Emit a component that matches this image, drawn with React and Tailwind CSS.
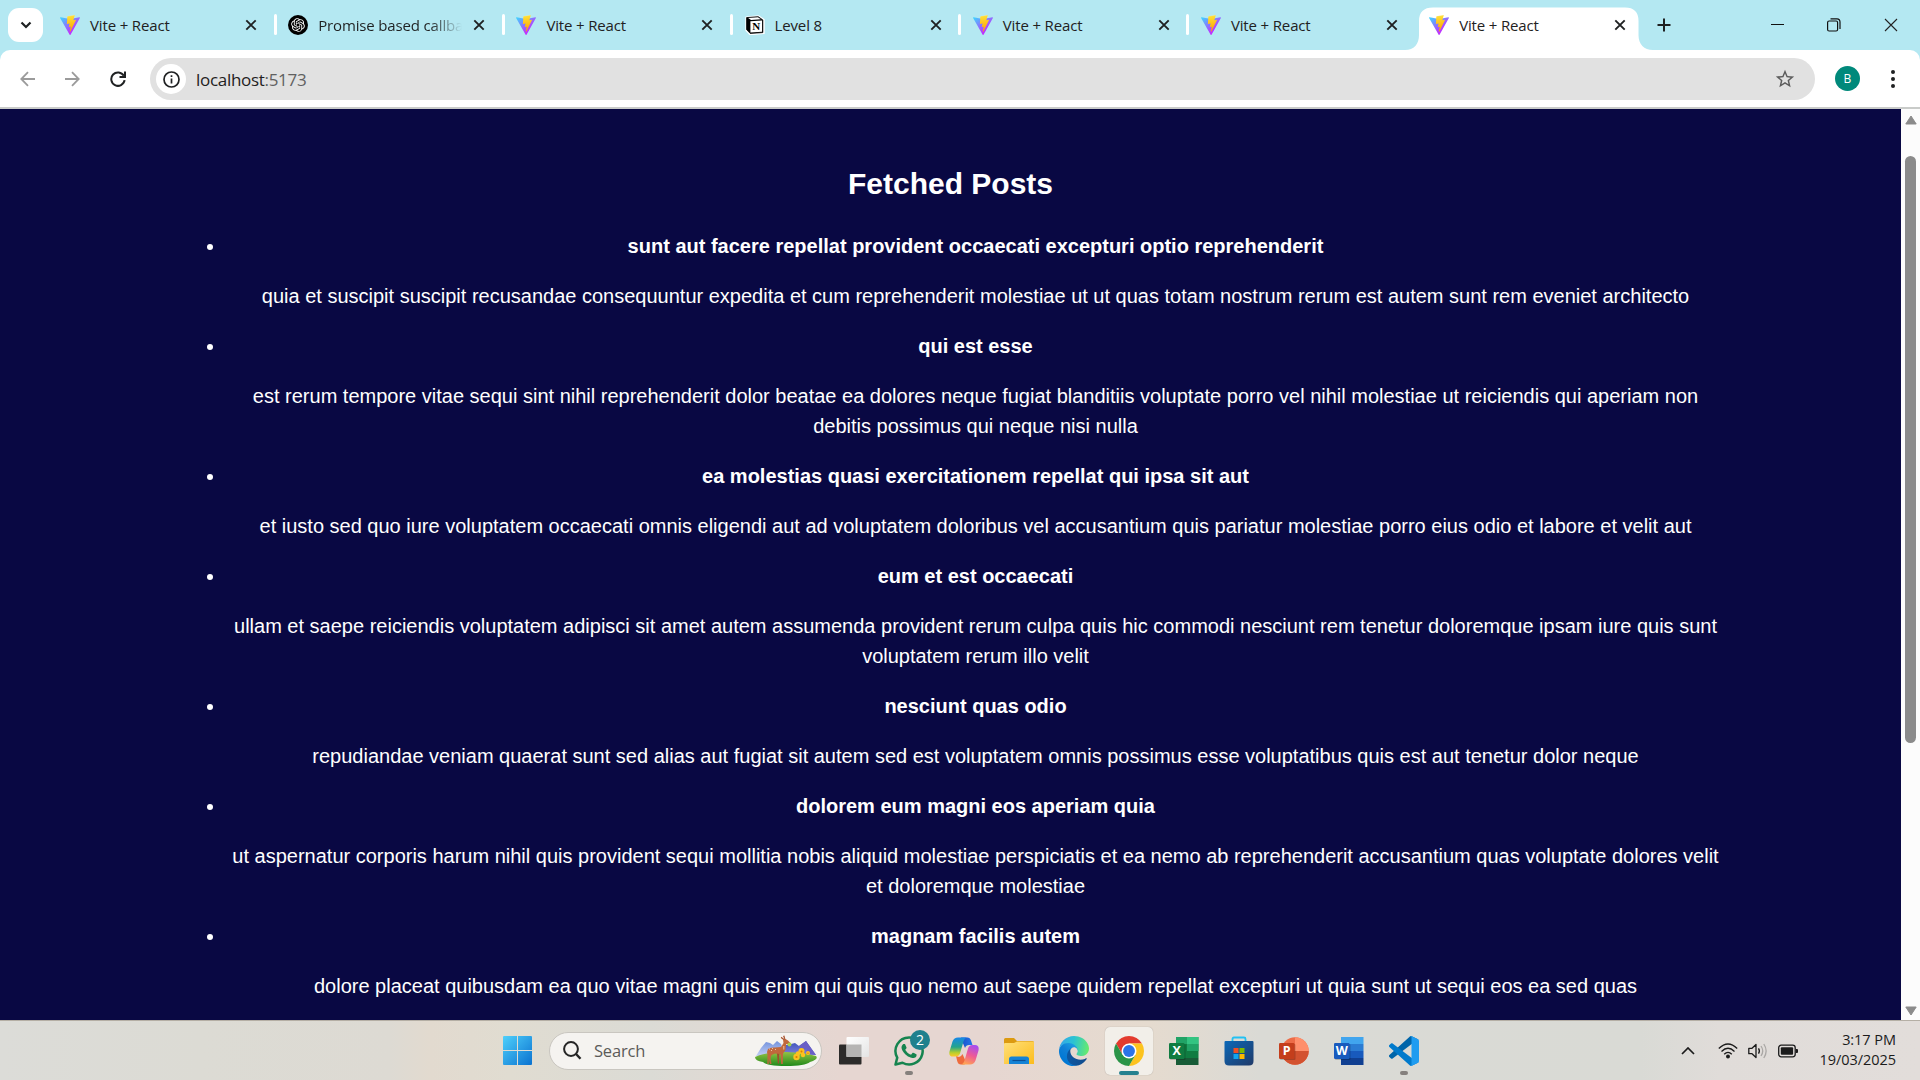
import React from "react";

const UI = "font-['Open_Sans','Noto_Sans',sans-serif]";

const posts = [
  ["sunt aut facere repellat provident occaecati excepturi optio reprehenderit", "quia et suscipit suscipit recusandae consequuntur expedita et cum reprehenderit molestiae ut ut quas totam nostrum rerum est autem sunt rem eveniet architecto"],
  ["qui est esse", "est rerum tempore vitae sequi sint nihil reprehenderit dolor beatae ea dolores neque fugiat blanditiis voluptate porro vel nihil molestiae ut reiciendis qui aperiam non debitis possimus qui neque nisi nulla"],
  ["ea molestias quasi exercitationem repellat qui ipsa sit aut", "et iusto sed quo iure voluptatem occaecati omnis eligendi aut ad voluptatem doloribus vel accusantium quis pariatur molestiae porro eius odio et labore et velit aut"],
  ["eum et est occaecati", "ullam et saepe reiciendis voluptatem adipisci sit amet autem assumenda provident rerum culpa quis hic commodi nesciunt rem tenetur doloremque ipsam iure quis sunt voluptatem rerum illo velit"],
  ["nesciunt quas odio", "repudiandae veniam quaerat sunt sed alias aut fugiat sit autem sed est voluptatem omnis possimus esse voluptatibus quis est aut tenetur dolor neque"],
  ["dolorem eum magni eos aperiam quia", "ut aspernatur corporis harum nihil quis provident sequi mollitia nobis aliquid molestiae perspiciatis et ea nemo ab reprehenderit accusantium quas voluptate dolores velit et doloremque molestiae"],
  ["magnam facilis autem", "dolore placeat quibusdam ea quo vitae magni quis enim qui quis quo nemo aut saepe quidem repellat excepturi ut quia sunt ut sequi eos ea sed quas"],
];

const tabs = [
  ["vite", "Vite + React"],
  ["gpt", "Promise based callba"],
  ["vite", "Vite + React"],
  ["notion", "Level 8"],
  ["vite", "Vite + React"],
  ["vite", "Vite + React"],
  ["vite", "Vite + React"],
];

function ViteIcon() {
  return (
    <svg viewBox="0 0 256 257" className="h-5 w-5 shrink-0">
      <defs>
        <linearGradient id="va" x1="-.8%" x2="57.6%" y1="7.7%" y2="78.4%">
          <stop offset="0%" stopColor="#41D1FF" />
          <stop offset="100%" stopColor="#BD34FE" />
        </linearGradient>
        <linearGradient id="vb" x1="43.4%" x2="50.3%" y1="2.2%" y2="89%">
          <stop offset="0%" stopColor="#FFEA83" />
          <stop offset="8.3%" stopColor="#FFDD35" />
          <stop offset="100%" stopColor="#FFA800" />
        </linearGradient>
      </defs>
      <path fill="url(#va)" d="M255.153 37.938L134.897 252.976c-2.483 4.44-8.862 4.466-11.382.048L.875 37.958c-2.746-4.814 1.371-10.646 6.827-9.67l120.385 21.517a6.537 6.537 0 0 0 2.322-.004l117.867-21.483c5.438-.991 9.574 4.796 6.877 9.62Z" />
      <path fill="url(#vb)" d="M185.432.063L96.44 17.501a3.268 3.268 0 0 0-2.634 3.014l-5.474 92.456a3.268 3.268 0 0 0 3.997 3.378l24.777-5.718c2.318-.535 4.413 1.507 3.936 3.838l-7.361 36.047c-.495 2.426 1.782 4.5 4.151 3.78l15.304-4.649c2.372-.72 4.652 1.36 4.15 3.788l-11.698 56.621c-.732 3.542 3.979 5.473 5.943 2.437l1.313-2.028l72.516-144.72c1.215-2.423-.88-5.186-3.54-4.672l-25.505 4.922c-2.396.462-4.435-1.77-3.759-4.114l16.646-57.705c.677-2.35-1.37-4.583-3.769-4.113Z" />
    </svg>
  );
}

function GptIcon() {
  return (
    <svg viewBox="0 0 24 24" className="h-5 w-5 shrink-0">
      <circle cx="12" cy="12" r="12" fill="#000" />
      <g transform="translate(3.8 3.8) scale(.683)" fill="#fff">
        <path d="M22.282 9.821a5.985 5.985 0 0 0-.516-4.91 6.046 6.046 0 0 0-6.51-2.9A6.065 6.065 0 0 0 4.981 4.18a5.985 5.985 0 0 0-3.998 2.9 6.046 6.046 0 0 0 .743 7.097 5.98 5.98 0 0 0 .51 4.911 6.051 6.051 0 0 0 6.515 2.9A5.985 5.985 0 0 0 13.26 24a6.056 6.056 0 0 0 5.772-4.206 5.99 5.99 0 0 0 3.997-2.9 6.056 6.056 0 0 0-.747-7.073zM13.26 22.43a4.476 4.476 0 0 1-2.876-1.04l.141-.081 4.779-2.758a.795.795 0 0 0 .392-.681v-6.737l2.02 1.168a.071.071 0 0 1 .038.052v5.583a4.504 4.504 0 0 1-4.494 4.494zM3.6 18.304a4.47 4.47 0 0 1-.535-3.014l.142.085 4.783 2.759a.771.771 0 0 0 .78 0l5.843-3.369v2.332a.08.08 0 0 1-.033.062L9.74 19.95a4.5 4.5 0 0 1-6.14-1.646zM2.34 7.896a4.485 4.485 0 0 1 2.366-1.973V11.6a.766.766 0 0 0 .388.676l5.815 3.355-2.02 1.168a.076.076 0 0 1-.071 0l-4.83-2.786A4.504 4.504 0 0 1 2.34 7.872zm16.597 3.855l-5.833-3.387L15.119 7.2a.076.076 0 0 1 .071 0l4.83 2.791a4.494 4.494 0 0 1-.676 8.105v-5.678a.79.79 0 0 0-.407-.667zm2.01-3.023l-.141-.085-4.774-2.782a.776.776 0 0 0-.785 0L9.409 9.23V6.897a.066.066 0 0 1 .028-.061l4.83-2.787a4.5 4.5 0 0 1 6.68 4.66zm-12.64 4.135l-2.02-1.164a.08.08 0 0 1-.038-.057V6.075a4.5 4.5 0 0 1 7.375-3.453l-.142.08L8.704 5.46a.795.795 0 0 0-.393.681zm1.097-2.365l2.602-1.5 2.607 1.5v2.999l-2.597 1.5-2.607-1.5z" />
      </g>
    </svg>
  );
}

function NotionIcon() {
  return (
    <svg viewBox="0 0 20 20" className="h-5 w-5 shrink-0">
      <path d="M1 2.2 13.6 1 19 4.6V18.4L5 19.5 1 15.2z" fill="#fff" stroke="#fff" strokeWidth="1.4" strokeLinejoin="round" />
      <path d="M1.6 2.6 13.2 1.7 17.8 4.9V17.6L5.2 18.4 1.6 14.6z" fill="#000" stroke="#000" strokeWidth=".8" strokeLinejoin="round" />
      <path d="M3.2 2.9 12.9 2.3 15.9 4.3 6 4.9z" fill="#fff" />
      <path d="M5.4 6.3 17 5.6V16.8L5.4 17.5z" fill="#fff" />
      <text x="11.2" y="15.3" textAnchor="middle" fontSize="11" fontWeight="700" fontFamily="Liberation Serif" fill="#000">N</text>
    </svg>
  );
}

const favicons = { vite: <ViteIcon />, gpt: <GptIcon />, notion: <NotionIcon /> };

function CloseGlyph() {
  return (
    <svg viewBox="0 0 12 12" className="h-3 w-3 shrink-0" stroke="#1f2122" strokeWidth="1.9" fill="none">
      <path d="M1.3 1.3 10.7 10.7M10.7 1.3 1.3 10.7" />
    </svg>
  );
}

function Tab({ icon, title, active, last }) {
  return (
    <div className="relative flex h-[50px] w-[228.2px] shrink-0 items-center">
      {active && (
        <svg className="absolute -left-[12px] top-[7px] h-[43px] w-[248px]" viewBox="0 0 248 43">
          <path d="M0 43C9 43 14 37 14 28V14Q14 .5 28 .5H220Q233.500 .5 233.500 14V28C233.500 37 239 43 248 43Z" fill="#fff" />
        </svg>
      )}
      <div className="relative flex w-full items-center pl-3 pb-px">
        {favicons[icon]}
        <div className="relative ml-[10px] mt-px w-[140px] whitespace-nowrap">
          <span className={icon === "gpt" ? "bg-gradient-to-r from-[#1f2122] from-[112px] to-transparent to-[144px] bg-clip-text text-transparent" : ""}>{title}</span>
        </div>
        <div className="ml-[15px]"><CloseGlyph /></div>
      </div>
      {!active && !last && <div className="absolute -right-[0.5px] top-[14px] h-[21px] w-[3px] rounded-full bg-white" />}
    </div>
  );
}

function TabStrip() {
  return (
    <div className="flex h-[50px] items-center bg-[#b4e8f2] text-[15px] tracking-[-0.15px] text-[#1f2122]">
      <div className="ml-2 flex h-[34px] w-[35px] items-center justify-center rounded-[11px] bg-white">
        <svg viewBox="0 0 12 8" className="h-2 w-3" fill="none" stroke="#1f2122" strokeWidth="2.2"><path d="M1.5 1.5 6 6 10.500 1.500" /></svg>
      </div>
      <div className="ml-[5px] flex">
        {tabs.map(([icon, title], i) => (
          <Tab key={i} icon={icon} title={title} active={i === 6} last={i === 5} />
        ))}
      </div>
      <svg viewBox="0 0 14 14" className="ml-[11.500px] h-[14px] w-[14px]" stroke="#1f2122" strokeWidth="2"><path d="M7 .5v13M.5 7h13" /></svg>
      <div className="ml-auto mr-[22px] flex items-center">
        <svg viewBox="0 0 13 13" className="h-[13px] w-[13px]" stroke="#111" strokeWidth="1"><path d="M0 5.500h13" /></svg>
        <svg viewBox="0 0 14 14" className="ml-[42.500px] h-[14px] w-[14px]" fill="none" stroke="#111" strokeWidth="1.200"><rect x=".6" y="3" width="10" height="10" rx="1.500" /><path d="M3.500.8H10Q13 .8 13 4V11" /></svg>
        <svg viewBox="0 0 14 14" className="ml-[43.500px] h-[14px] w-[14px]" fill="none" stroke="#222" strokeWidth="1.100"><path d="M1 1 13 13M13 1 1 13" /></svg>
      </div>
    </div>
  );
}

function Toolbar() {
  return (
    <div className="bg-[#b4e8f2]">
      <div className="flex h-[57px] items-center rounded-t-[10px] bg-white">
        <svg viewBox="0 0 16 16" className="ml-5 h-4 w-4" fill="none" stroke="#9b9b9b" strokeWidth="1.800"><path d="M15 8H1.500M8 1.200 1.300 8 8 14.800" /></svg>
        <svg viewBox="0 0 16 16" className="ml-[28px] h-4 w-4" fill="none" stroke="#9b9b9b" strokeWidth="1.800"><path d="M1 8H14.500M8 1.200 14.700 8 8 14.800" /></svg>
        <svg viewBox="0 0 16 16" className="ml-[29.500px] h-4 w-4" fill="none" stroke="#1f2122" strokeWidth="2"><path d="M13.800 4.800A6.700 6.700 0 1 0 14.600 9.200" /><path d="M15 .5V6H9.500" /></svg>
        <div className="ml-[24.500px] mt-[1px] flex h-[42px] w-[1665px] items-center rounded-full bg-[#e1e1e1]">
          <div className="ml-[6px] flex h-[30px] w-[30px] items-center justify-center rounded-full bg-white">
            <svg viewBox="0 0 17 17" className="h-[17px] w-[17px]" fill="none" stroke="#1f2122" strokeWidth="1.700"><circle cx="8.500" cy="8.500" r="7.500" /><path d="M8.500 7.500v5M8.500 4.200v1.900" /></svg>
          </div>
          <div className="ml-[10px] mt-px text-[17px] tracking-[-0.3px] text-[#1f2122]">localhost<span className="text-[#606060]">:5173</span></div>
          <svg viewBox="0 0 24 24" className="ml-auto mr-[19px] h-[22px] w-[22px]" fill="#5c5c5c"><path d="M22 9.240l-7.190-.620L12 2 9.190 8.630 2 9.240l5.460 4.730L5.820 21 12 17.270 18.180 21l-1.630-7.030L22 9.240zM12 15.400l-3.760 2.270 1-4.280-3.320-2.880 4.380-.380L12 6.100l1.710 4.040 4.380.380-3.320 2.880 1 4.280L12 15.400z" /></svg>
        </div>
        <div className="ml-[20px] flex h-[25px] w-[25px] items-center justify-center rounded-full bg-[#00897b] text-[12px] text-white">B</div>
        <svg viewBox="0 0 4 18" className="ml-[30.500px] h-[18px] w-1" fill="#1f2122"><circle cx="2" cy="2" r="2" /><circle cx="2" cy="9" r="2" /><circle cx="2" cy="16" r="2" /></svg>
      </div>
      <div className="h-[2px] bg-[#c9cbc9]" />
    </div>
  );
}

function Page() {
  return (
    <div className="flex h-[911px]">
      <div className="h-full w-[1901px] overflow-hidden bg-[#090843] px-[175.500px] pt-[52px] text-center font-['Liberation_Sans',Arial,sans-serif] text-[20px] leading-[30px] text-white">
        <h2 className="text-[30px] font-bold leading-[45px]">Fetched Posts</h2>
        <ul className="mt-[25px] list-disc pl-[50px]">
          {posts.map(([t, b]) => (
            <li key={t}>
              <strong>{t}</strong>
              <p className="my-5">{b}</p>
            </li>
          ))}
        </ul>
      </div>
      <div className="flex w-[19px] flex-col items-center bg-[#fcfcfc]">
        <svg viewBox="0 0 12 10" className="mt-[6px] h-[10px] w-3" fill="#8b8b8b"><path d="M6 1 11.200 9H.8z" stroke="#8b8b8b" strokeLinejoin="round" /></svg>
        <div className="mt-[31px] h-[587px] w-[11px] rounded-full bg-[#8b8b8b]" />
        <svg viewBox="0 0 12 10" className="mt-auto mb-[4px] h-[10px] w-3" fill="#8b8b8b"><path d="M6 9 11.200 1H.8z" stroke="#8b8b8b" strokeLinejoin="round" /></svg>
      </div>
    </div>
  );
}

function StartIcon() {
  return (
    <svg viewBox="0 0 29 29" className="h-[29px] w-[29px]">
      <linearGradient id="win" x1="0" y1="0" x2="1" y2="1" gradientUnits="objectBoundingBox"><stop stopColor="#4fd0fb" /><stop offset="1" stopColor="#0a72d0" /></linearGradient>
      <path d="M1 0H14V14H0V1Q0 0 1 0zM15 0H28Q29 0 29 1V14H15zM0 15H14V29H1Q0 29 0 28zM15 15H29V28Q29 29 28 29H15z" fill="url(#win)" />
    </svg>
  );
}

function DeerArt() {
  return (
    <svg viewBox="0 0 62 32" className="h-8 w-[62px]">
      <defs>
        <linearGradient id="mt" x1="0" y1="0" x2="0" y2="1"><stop stopColor="#7291dc" /><stop offset="1" stopColor="#c3cff5" /></linearGradient>
        <linearGradient id="mr" x1="0" y1="0" x2="0" y2="1"><stop stopColor="#3a50b8" /><stop offset="1" stopColor="#7f83dc" /></linearGradient>
        <linearGradient id="gr" x1="0" y1="0" x2="0" y2="1"><stop stopColor="#93c244" /><stop offset="1" stopColor="#1f8a1b" /></linearGradient>
      </defs>
      <path d="M1 21 6 13 11 7 15 8 18 10 22 6 26 9 30 20z" fill="url(#mt)" />
      <path d="M26 19 31 10 36 9 40 8 44 11 51 6 61 20z" fill="url(#mr)" />
      <path d="M44 11 51 6 61 20 51 19 52 13 48 16z" fill="#6a5fc6" />
      <path d="M0 22Q12 16.500 31 17T61 21Q64 24 55 27 50 31 31 31 12 31 8 27 0 26 0 22z" fill="url(#gr)" />
      <path d="M13 14Q15 12 20 12.500L26 12 28.500 8 28 4.500 30.500 4 33 5.500 35.500 8 34 9 31.200 9 30.500 15 28 18.500 27.800 29H26.200L25.600 19.500 20 18.500 16.500 20 15.500 23 16.500 29H15L13.600 23 13.800 29H12.300L12.500 20 12 17z" fill="#c1683c" />
      <path d="M22 18.500 22.800 28.500H24L24.300 19z" fill="#9f4f2c" />
      <path d="M28.500 5 25.800 3 26.300 1.800 29.300 4 28 1 29.400.5 30.500 4.500z" fill="#a8542f" />
      <path d="M14 14h1M17 13.500h1M20 14.500h1M16 15.500h1M28.800 11v3.500" stroke="#f5d9bd" strokeWidth=".8" />
      <circle cx="34.500" cy="9.500" r="2" fill="#a5d04a" />
      <g fill="#fcc21f"><circle cx="46.500" cy="16" r="3" /><circle cx="41.500" cy="22" r="3.200" /><circle cx="43" cy="18.500" r="2.200" /><circle cx="48" cy="20" r="2.200" /><circle cx="53" cy="18" r="2" /></g>
      <g fill="#e07a05"><circle cx="46.500" cy="16.500" r="1" /><circle cx="41.500" cy="22" r="1.100" /><circle cx="53" cy="18.300" r=".7" /></g>
    </svg>
  );
}

function TaskViewIcon() {
  return (
    <svg viewBox="0 0 30 30" className="h-[30px] w-[30px]">
      <linearGradient id="tv" x1="0" y1="0" x2="1" y2="1"><stop stopColor="#fff" /><stop offset="1" stopColor="#e4e4e4" /></linearGradient>
      <rect x="0" y="8.500" width="22.500" height="20" rx="1" fill="#2c2b2a" />
      <rect x="7.500" y="1" width="22.500" height="20" rx="1" fill="url(#tv)" />
      <path d="M7.500 8.500h15V21h-15z" fill="#b5b4b3" />
    </svg>
  );
}

function WhatsAppIcon() {
  return (
    <svg viewBox="0 0 24 24" className="h-[30px] w-[30px]" fill="#16844f">
      <path d="M17.472 14.382c-.297-.149-1.758-.867-2.030-.967-.273-.099-.471-.148-.670.150-.197.297-.767.966-.940 1.164-.173.199-.347.223-.644.075-.297-.150-1.255-.463-2.390-1.475-.883-.788-1.480-1.761-1.653-2.059-.173-.297-.018-.458.130-.606.134-.133.298-.347.446-.520.149-.174.198-.298.298-.497.099-.198.050-.371-.025-.520-.075-.149-.669-1.612-.916-2.207-.242-.579-.487-.500-.669-.510-.173-.008-.371-.010-.570-.010-.198 0-.520.074-.792.372-.272.297-1.040 1.016-1.040 2.479 0 1.462 1.065 2.875 1.213 3.074.149.198 2.096 3.200 5.077 4.487.709.306 1.262.489 1.694.625.712.227 1.360.195 1.871.118.571-.085 1.758-.719 2.006-1.413.248-.694.248-1.289.173-1.413-.074-.124-.272-.198-.570-.347z" />
      <path d="M12 1.200A10.800 10.800 0 0 0 2.600 17.300L1.200 22.800 6.800 21.400A10.800 10.800 0 1 0 12 1.200z" fill="none" stroke="#16844f" strokeWidth="2" strokeLinejoin="round" />
    </svg>
  );
}

function CopilotIcon() {
  return (
    <svg viewBox="0 0 30 30" className="h-[30px] w-[30px]">
      <defs>
        <linearGradient id="c1" x1="0" y1="0" x2="0" y2="1"><stop stopColor="#1687e8" /><stop offset=".5" stopColor="#24a48c" /><stop offset=".8" stopColor="#b8cf2c" /><stop offset="1" stopColor="#ffc928" /></linearGradient>
        <linearGradient id="c2" x1=".7" y1="0" x2=".3" y2="1"><stop stopColor="#a74df0" /><stop offset=".5" stopColor="#ee5a95" /><stop offset="1" stopColor="#ffa552" /></linearGradient>
        <linearGradient id="c3" x1="0" y1="0" x2="1" y2="0"><stop stopColor="#1a4fc9" /><stop offset="1" stopColor="#2178ea" /></linearGradient>
      </defs>
      <path d="M12 1.500H18.500Q21 1.500 22 4.500L23.500 9H20Q17 9 16 12L13 5z" fill="url(#c3)" />
      <path d="M7 20 10 21Q12 21 13.500 18L17 26 15.500 28.500H12Q9 28.500 8.200 25z" fill="#ee6b3c" />
      <path d="M9 1.500H18Q15.500 2 14.500 5.500L11 17.500Q10 20.500 6.500 20.500H4Q-.5 20.500 .5 15.500L3.500 5.500Q5 1.500 9 1.500z" fill="url(#c1)" />
      <path d="M21 28.500H12Q14.500 28 15.500 24.500L19 12.500Q20 9 23.500 9H26Q30.500 9 29.500 14.500L26.500 24.500Q25 28.500 21 28.500z" fill="url(#c2)" />
    </svg>
  );
}

function ExplorerIcon() {
  return (
    <svg viewBox="0 0 30 30" className="h-[30px] w-[30px]">
      <linearGradient id="fo" x1="0" y1="0" x2="1" y2="1"><stop stopColor="#ffe07a" /><stop offset="1" stopColor="#fcbc1c" /></linearGradient>
      <path d="M0 3.500Q0 2 1.500 2H10L13 5H28.500Q30 5 30 6.500V10H0z" fill="#dc9a10" />
      <path d="M0 8Q0 7 1 7H10L13 5.500H29Q30 5.500 30 6.500V28H0z" fill="url(#fo)" />
      <path d="M5 28V23Q5 20.500 7.500 20.500H22.500Q25 20.500 25 23V28z" fill="#1583d6" />
      <path d="M8.500 24.500h13" stroke="#0b4f95" strokeWidth="1.200" />
    </svg>
  );
}

function EdgeIcon() {
  return (
    <svg viewBox="0 0 256 256" className="h-[30px] w-[30px]">
      <defs>
        <linearGradient id="e1" x1="63" y1="177" x2="242" y2="177" gradientUnits="userSpaceOnUse"><stop stopColor="#0c59a4" /><stop offset="1" stopColor="#114a8b" /></linearGradient>
        <linearGradient id="e2" x1="153" y1="99" x2="46" y2="216" gradientUnits="userSpaceOnUse"><stop stopColor="#1b9de2" /><stop offset=".5" stopColor="#0f7fd6" /><stop offset="1" stopColor="#0078d4" /></linearGradient>
        <linearGradient id="e3" x1="10" y1="60" x2="250" y2="110" gradientUnits="userSpaceOnUse"><stop stopColor="#35a8e8" /><stop offset=".45" stopColor="#2bc3d2" /><stop offset="1" stopColor="#66eb6e" /></linearGradient>
      </defs>
      <path d="M231 190.500c-3.400 1.800-6.900 3.400-10.500 4.700-11.500 4.300-23.600 6.500-35.900 6.500-47.300 0-88.500-32.500-88.500-74.300.1-11.400 6.400-21.900 16.400-27.300C69.700 101.900 58.700 146.500 58.700 172.600c0 73.900 68.100 81.400 82.800 81.400 7.900 0 19.800-2.300 27-4.600l1.300-.4c27.600-9.500 51-28.100 66.600-52.800 1.200-1.900.6-4.300-1.200-5.500-1.300-.8-2.900-.9-4.200-.2z" fill="url(#e1)" />
      <path d="M105.700 241.400c-8.900-5.500-16.600-12.800-22.700-21.300-26.300-36-18.400-86.500 17.600-112.800 3.800-2.700 7.700-5.200 11.900-7.200 3.100-1.500 8.400-4.100 15.500-4 10.100.1 19.600 4.900 25.700 13 4 5.400 6.300 11.900 6.400 18.700 0-.2 24.500-79.600-80-79.600-43.900 0-80 41.700-80 78.200-.2 19.300 4 38.500 12.100 56 27.600 58.800 94.800 87.600 156.400 67.100-21.100 6.600-44.100 3.700-62.900-8.100z" fill="url(#e2)" />
      <path d="M152.300 148.900c-.8 1-3.300 2.500-3.300 5.700 0 2.600 1.700 5.100 4.700 7.200 14.400 10 41.500 8.700 41.600 8.700 10.700 0 21.100-2.900 30.300-8.300 18.800-11 30.400-31.100 30.400-52.900.3-22.400-8-37.300-11.300-43.900C223.500 24 177.700 0 128 0 58 0 1 56.200 0 126.200c.5-36.500 36.800-66 80-66 3.500 0 23.500.3 42 10.100 16.300 8.600 24.900 18.900 30.800 29.200 6.200 10.700 7.300 24.100 7.300 29.500s-2.700 13.300-7.800 19.900z" fill="url(#e3)" />
    </svg>
  );
}

function ChromeIcon() {
  return (
    <svg viewBox="0 0 48 48" className="h-[30px] w-[30px]">
      <path d="M24 12H44.780A24 24 0 0 0 3.220 12L13.600 30z" fill="#e33b2e" />
      <path d="M34.400 30 24 48A24 24 0 0 0 44.780 12H24z" fill="#fcc31e" />
      <path d="M13.610 30 3.220 12A24 24 0 0 0 24 48L34.390 30z" fill="#2a9447" />
      <circle cx="24" cy="24" r="12" fill="#fff" />
      <circle cx="24" cy="24" r="9.500" fill="#2b73e8" />
    </svg>
  );
}

function OfficeIcon({ letter, rows, plate }) {
  return (
    <svg viewBox="0 0 30 30" className="h-[30px] w-[30px]">
      {letter === "P" ? (
        <g>
          <circle cx="16" cy="15" r="13.700" fill="#ed6c47" />
          <path d="M16 1.300A13.700 13.700 0 0 1 29.700 15H16z" fill="#ff8f6b" />
          <path d="M2.300 15H29.700A13.700 13.700 0 0 1 2.300 15z" fill="#d35230" />
        </g>
      ) : (
        <g>
          {rows.map((c, i) => (
            <rect key={i} x="7" y={1 + i * 7} width="22.500" height="7" fill={c} />
          ))}
          {letter === "X" && <path d="M18 1H29.500V8H18z" fill="#33c481" />}
          {letter === "X" && <path d="M18 8H29.500V15H18z" fill="#21a366" />}
        </g>
      )}
      <rect x="1" y="8" width="15.500" height="16" rx="1" fill="#000" opacity=".2" />
      <rect x="0" y="7" width="15.500" height="16" rx="1.200" fill={plate} />
      <text x="7.700" y="19.400" textAnchor="middle" fontSize="12.500" fontWeight="700" fontFamily="Open Sans" fill="#fff">{letter}</text>
    </svg>
  );
}

function StoreIcon() {
  return (
    <svg viewBox="0 0 30 30" className="h-[30px] w-[30px]">
      <linearGradient id="st" x1="0" y1="0" x2="1" y2="1"><stop stopColor="#0b68b8" /><stop offset="1" stopColor="#213a68" /></linearGradient>
      <path d="M8.500 6V3Q8.500 1.500 10 1.500H20Q21.500 1.500 21.500 3V6" fill="none" stroke="#22c1f3" strokeWidth="1.800" />
      <path d="M.5 6Q.5 5 1.500 5H28.500Q29.500 5 29.500 6V25Q29.500 29.500 25 29.500H5Q.5 29.500 .5 25z" fill="url(#st)" />
      <path d="M9.500 12h5v5h-5z" fill="#f25022" /><path d="M15.500 12h5v5h-5z" fill="#7fba00" /><path d="M9.500 18h5v5h-5z" fill="#12a5ee" /><path d="M15.500 18h5v5h-5z" fill="#ffb900" />
    </svg>
  );
}

function CodeIcon() {
  return (
    <svg viewBox="0 0 100 100" className="h-[30px] w-[30px]">
      <path d="M96.500 10.800 75.900.9C73.500-.3 70.700.2 68.800 2.100L1.300 63.600c-1.800 1.700-1.800 4.500 0 6.200l5.500 5c1.500 1.300 3.700 1.400 5.300.2L93.400 13.400c2.700-2.100 6.600-.1 6.600 3.300v-.2c0-2.400-1.400-4.600-3.500-5.700z" fill="#0065a9" />
      <path d="M96.500 89.200 75.900 99.100c-2.400 1.200-5.200.7-7.100-1.200L1.300 36.400c-1.800-1.700-1.800-4.500 0-6.200l5.500-5c1.500-1.300 3.700-1.400 5.300-.2l81.300 61.600c2.700 2.100 6.600.1 6.600-3.300v.2c0 2.400-1.400 4.600-3.500 5.700z" fill="#007acc" />
      <path d="M75.900 99.100c-2.400 1.200-5.200.7-7.100-1.200 2.300 2.300 6.200.7 6.200-2.600V4.700c0-3.300-3.900-4.900-6.200-2.600 1.900-1.900 4.700-2.400 7.100-1.200l20.600 9.900c2.100 1 3.500 3.200 3.500 5.600v67.200c0 2.400-1.400 4.600-3.500 5.600z" fill="#1f9cf0" />
    </svg>
  );
}

function Slot({ children, active, running }) {
  return (
    <div className="flex w-[55px] shrink-0 justify-center">
      <div className={"relative flex h-12 w-12 items-center justify-center " + (active ? "rounded-[5px] bg-[#f2efe9] shadow-[0_0_1px_#00000050]" : "")}>
        {children}
        {active && <div className="absolute bottom-0 h-1 w-5 rounded-full bg-[#26818f]" />}
        {running && <div className="absolute bottom-0 h-1 w-2 rounded-full bg-[#85807d]" />}
      </div>
    </div>
  );
}

function Taskbar() {
  return (
    <div className="flex h-[60px] items-center border-t border-[#b5afa5] bg-[linear-gradient(90deg,#dcdcd8_0px,#dcdbd4_200px,#dddad3_390px,#e2dacf_430px,#e0dcd1_510px,#dbdbd5_650px,#e6d6d1_840px,#e6d6d1_980px,#e5dbcf_1150px,#dadad5_1260px,#d9dad5_1640px,#e0dcd9_1720px,#e2ddda_1920px)]">
      <div className="ml-[490px] flex items-center"><Slot><StartIcon /></Slot></div>
      <div className="ml-1 flex h-[38px] w-[273px] shrink-0 items-center rounded-full border border-[#c9c6c0] bg-[#f5f3f0]">
        <svg viewBox="0 0 19 19" className="ml-[13px] h-[19px] w-[19px]" fill="none" stroke="#252525" strokeWidth="2"><circle cx="8" cy="8" r="6.900" /><path d="M12.800 12.800 17.500 17.800" strokeWidth="2.400" /></svg>
        <span className="ml-[12px] mt-px text-[16.500px] tracking-[-0.2px] text-[#5c5b59]">Search</span>
        <div className="ml-auto mr-[4px]"><DeerArt /></div>
      </div>
      <div className="ml-[4.500px] flex">
        <Slot><TaskViewIcon /></Slot>
        <Slot running>
          <WhatsAppIcon />
          <div className="absolute left-[25px] top-[3px] flex h-5 w-5 items-center justify-center rounded-full bg-[#1f808d] text-[14px] text-white">2</div>
        </Slot>
        <Slot><CopilotIcon /></Slot>
        <Slot><ExplorerIcon /></Slot>
        <Slot><EdgeIcon /></Slot>
        <Slot active><ChromeIcon /></Slot>
        <Slot><OfficeIcon letter="X" rows={["#21a366", "#107c41", "#107c41", "#185c37"]} plate="#107c41" /></Slot>
        <Slot><StoreIcon /></Slot>
        <Slot><OfficeIcon letter="P" plate="#c43e1c" /></Slot>
        <Slot><OfficeIcon letter="W" rows={["#41a5ee", "#2b7cd3", "#185abd", "#103f91"]} plate="#185abd" /></Slot>
        <Slot running><CodeIcon /></Slot>
      </div>
      <div className="ml-auto mr-6 flex items-center">
        <svg viewBox="0 0 14 8" className="h-2 w-[14px]" fill="none" stroke="#1b1b1b" strokeWidth="1.700"><path d="M1 7 7 1 13 7" /></svg>
        <svg viewBox="0 0 20 16" className="ml-[23px] h-4 w-5" fill="none" stroke="#1b1b1b" strokeWidth="1.300"><path d="M.8 5.500Q10-3.500 19.200 5.500M3.500 8.500Q10 2 16.500 8.500M6.200 11.300Q10 7.500 13.800 11.300" /><circle cx="10" cy="13.500" r="1.300" fill="#1b1b1b" /></svg>
        <svg viewBox="0 0 20 16" className="ml-[10px] h-4 w-5" fill="none" stroke="#1b1b1b" strokeWidth="1.300"><path d="M.8 5.300H4L8 1.500V14.500L4 10.700H.8z" strokeLinejoin="round" /><path d="M10.500 5.300Q12.300 8 10.500 10.700" /><path d="M13 3Q16.500 8 13 13M15.800 1Q20.500 8 15.800 15" stroke="#aaa7a5" /></svg>
        <svg viewBox="0 0 20 14" className="ml-[10px] h-[14px] w-5" fill="#1b1b1b"><rect x=".7" y="1.200" width="16.500" height="11.600" rx="2.500" fill="none" stroke="#1b1b1b" strokeWidth="1.300" /><rect x="2.800" y="3.300" width="12.300" height="7.400" rx="1" /><path d="M17.800 5H19Q20 5 20 6V8Q20 9 19 9H17.800z" /></svg>
        <div className="-mt-[2px] ml-[21px] w-[77px] whitespace-nowrap text-right text-[14.500px] leading-5 tracking-[-0.05px] text-[#1b1b1b]">
          <div>3:17 PM</div>
          <div>19/03/2025</div>
        </div>
      </div>
    </div>
  );
}

export default function App() {
  return (
    <div className={"flex h-[1080px] w-[1920px] flex-col overflow-hidden " + UI}>
      <TabStrip />
      <Toolbar />
      <Page />
      <Taskbar />
    </div>
  );
}
